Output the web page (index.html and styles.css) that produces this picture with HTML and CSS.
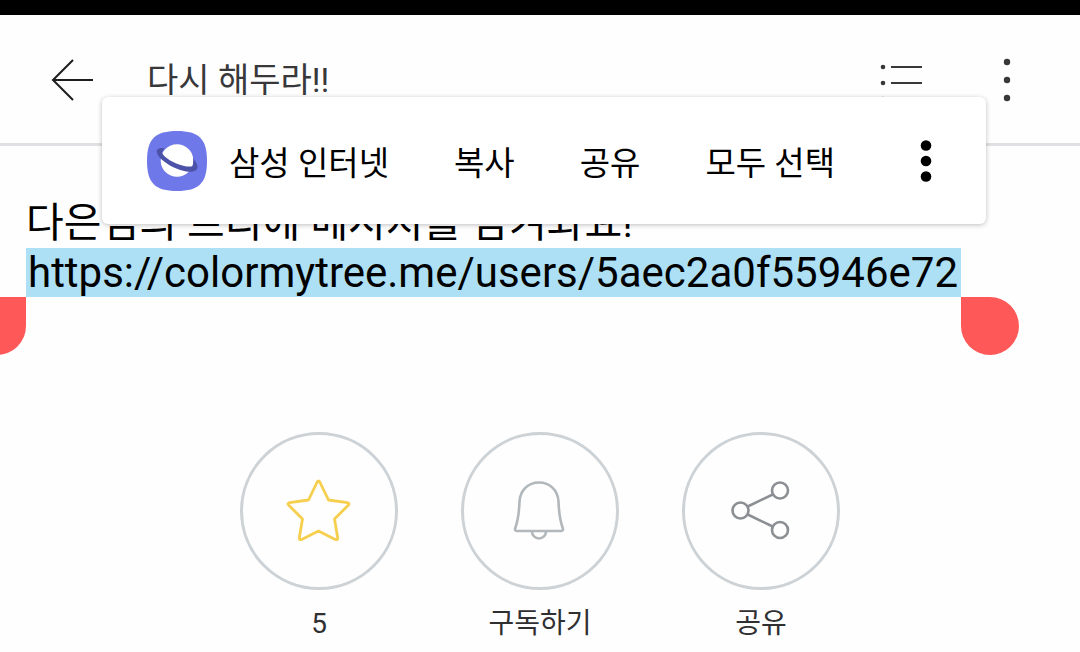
FILE: index.html
```
<!DOCTYPE html>
<html lang="ko">
<head>
    <meta charset="UTF-8">
    <meta name="viewport" content="width=device-width, initial-scale=1">
    <title>다시 해두라!!</title>
    <link rel="stylesheet" href="styles.css">
</head>
<body>
<div class="status-bar"></div>

<header class="app-header">
    <button type="button" class="icon-btn" aria-label="뒤로">
        <svg width="44" height="44" viewBox="0 0 44 44" fill="none" stroke="#1d1d1f" stroke-width="2">
            <path d="M23 2 3 22l20 20"/>
            <path d="M3 22h40"/>
        </svg>
    </button>
    <h1 class="app-title">다시 해두라!!</h1>
    <button type="button" class="icon-btn list-btn" aria-label="목록">
        <svg width="44" height="44" viewBox="0 0 44 44" fill="#38383b">
            <circle cx="4" cy="9" r="2.3"/>
            <circle cx="4" cy="25" r="2.3"/>
            <circle cx="4" cy="41" r="2.3"/>
            <path d="M12 8h31v2H12zM12 24h31v2H12zM12 40h31v2H12z"/>
        </svg>
    </button>
    <button type="button" class="icon-btn" aria-label="더보기">
        <svg width="44" height="44" viewBox="0 0 44 44" fill="#38383b">
            <circle cx="22" cy="4" r="3.2"/>
            <circle cx="22" cy="22" r="3.2"/>
            <circle cx="22" cy="40" r="3.2"/>
        </svg>
    </button>
</header>

<main class="post">
    <div class="post-text">
        <p>다은님의 트리에 메시지를 남겨봐요!</p>
        <a class="selected-link" href="https://colormytree.me/users/5aec2a0f55946e72">https://colormytree.me/users/5aec2a0f55946e72<span class="handle handle-start"></span><span class="handle handle-end"></span></a>
    </div>

    <div class="actions">
        <button type="button" class="action">
            <span class="action-circle">
                <svg width="70" height="70" viewBox="0 0 70 70" fill="none" stroke="#f6cf4f" stroke-width="2.8" stroke-linejoin="round">
                    <path d="M33.200 6q1.300-2.400 2.600 0L44.500 24l18.900 2.700q2.600.6.800 2.600L50.500 43l3.200 18.800q.2 2.600-2.400 1.600L34.500 55l-16.800 8.400q-2.600 1-2.400-1.600L18.500 43 4.800 29.300Q3 27.300 5.600 26.700L24.500 24z"/>
                </svg>
            </span>
            <span class="action-label">5</span>
        </button>
        <button type="button" class="action">
            <span class="action-circle">
                <svg width="70" height="70" viewBox="0 0 70 70" fill="none" stroke="#b1b7bb" stroke-width="2.6" stroke-linejoin="round">
                    <path d="M34 6.500c-11 0-19 8-19.500 19-.4 11-1.500 19-4.200 26.500q-1 3 1.500 3h44.400q2.500 0 1.500-3C55 44.500 53.900 36.500 53.500 25.500 53 14.500 45 6.500 34 6.500z"/>
                    <path d="M27 55.500a7 7 0 0 0 14 0"/>
                </svg>
            </span>
            <span class="action-label">구독하기</span>
        </button>
        <button type="button" class="action">
            <span class="action-circle">
                <svg width="70" height="70" viewBox="0 0 70 70" fill="none" stroke="#8b8f93" stroke-width="2.6">
                    <circle cx="14.500" cy="34.500" r="8"/>
                    <circle cx="54" cy="14.500" r="8"/>
                    <circle cx="54" cy="54" r="8"/>
                    <path d="m21.700 30.500 25-12M21.700 38.500l25 12"/>
                </svg>
            </span>
            <span class="action-label">공유</span>
        </button>
    </div>
</main>

<!-- 텍스트 선택 메뉴 -->
<div class="selection-menu">
    <button type="button" class="menu-item menu-app">
        <svg width="60" height="60" viewBox="0 0 60 60">
            <path fill="#6f78e8" d="M30 0c22 0 30 8 30 30s-8 30-30 30S0 52 0 30 8 0 30 0z"/>
            <circle cx="30" cy="29.500" r="16.300" fill="#fff"/>
            <path fill="#4b52a8" d="M17.500 17C12 16.500 8.500 18.500 10 22c1.500 3.500 3.500 5.500 6.500 8 4 3.300 8.500 6 13.500 7.800 4.500 1.700 8 2.800 12 3 5 .2 9-1.500 8.500-5.300-.3-3-2.300-5.600-4.600-8.200.7 2.900.6 5.700-.4 8-4.500.8-9-.3-13.500-1.800-4.500-1.600-8.500-3.500-12-6.200-2.200-1.700-4-3.600-5-5.600.5-1.700 1.300-3.300 2.500-4.700z"/>
        </svg>
        <span>삼성 인터넷</span>
    </button>
    <button type="button" class="menu-item">복사</button>
    <button type="button" class="menu-item">공유</button>
    <button type="button" class="menu-item">모두 선택</button>
    <button type="button" class="menu-item menu-more" aria-label="더보기">
        <svg width="12" height="44" viewBox="0 0 12 44">
            <circle cx="6" cy="6.500" r="5.300"/>
            <circle cx="6" cy="22" r="5.300"/>
            <circle cx="6" cy="37.500" r="5.300"/>
        </svg>
    </button>
</div>
</body>
</html>
```
FILE: styles.css
```
* {
    box-sizing: border-box;
}

body {
    margin: 0;
    background: #fefefe;
    color: #000;
    font-family: Roboto, "Noto Sans CJK KR", sans-serif;
    overflow: hidden;
}

button {
    padding: 0;
    border: 0;
    background: none;
    color: inherit;
    font: inherit;
    cursor: pointer;
}

svg {
    display: block;
}

.status-bar {
    height: 15px;
    background: #000;
}

/* 상단 바 */
.app-header {
    display: flex;
    align-items: center;
    height: 131px;
    padding: 2px 51px 0 50px;
    border-bottom: 3px solid #dfe1e4;
}

.app-title {
    flex: 1;
    margin: 0 0 0 53px;
    color: #38383b;
    font-size: 34px;
    font-weight: 400;
    line-height: 44px;
}

.list-btn {
    margin-right: 62px;
}

/* 본문 */
.post-text {
    padding: 53px 26px 0;
    font-size: 42px;
    line-height: 49px;
}

.post-text p {
    margin: 0;
    font-size: 41px;
}

.selected-link {
    position: relative;
    display: inline-block;
    padding: 0 3px 0 2px;
    background: #ade0f5;
    color: inherit;
    text-decoration: none;
}

.handle {
    position: absolute;
    top: 100%;
    width: 58px;
    height: 58px;
    background: #ff5858;
}

.handle-start {
    right: 100%;
    border-radius: 29px 0 29px 29px;
}

.handle-end {
    left: 100%;
    border-radius: 0 29px 29px 29px;
}

/* 하단 버튼 */
.actions {
    display: flex;
    justify-content: center;
    gap: 63px;
    padding-top: 135px;
}

.action {
    width: 158px;
}

.action-circle {
    display: flex;
    align-items: center;
    justify-content: center;
    height: 158px;
    border: 3px solid #cdd2d6;
    border-radius: 50%;
}

.action-label {
    display: block;
    margin-top: 14px;
    color: #303033;
    font-size: 28px;
    line-height: 40px;
}

/* 선택 메뉴 */
.selection-menu {
    position: absolute;
    top: 97px;
    left: 102px;
    right: 94px;
    display: flex;
    align-items: center;
    height: 127px;
    padding: 0 54px 0 45px;
    gap: 65px;
    background: #fff;
    border-radius: 6px;
    box-shadow: 0 1px 5px rgba(0, 0, 0, 0.25);
    font-size: 33px;
}

.menu-app {
    display: flex;
    align-items: center;
    gap: 22px;
}

.menu-more {
    margin-left: auto;
}
```
